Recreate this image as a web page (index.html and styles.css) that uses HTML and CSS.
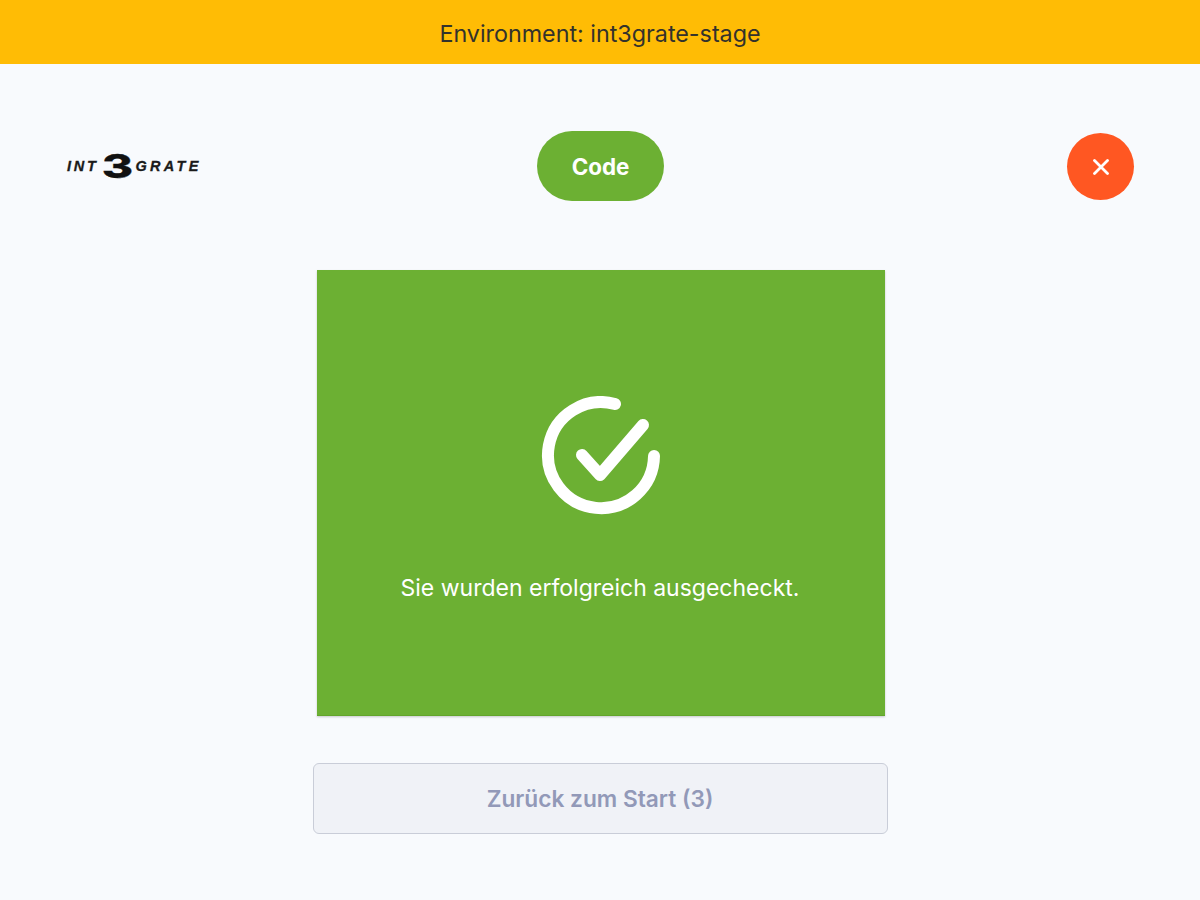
FILE: index.html
```html
<!DOCTYPE html>
<html lang="de">
<head>
  <meta charset="UTF-8">
  <meta name="viewport" content="width=device-width, initial-scale=1.0">
  <title>Checkout</title>
  <link rel="stylesheet" href="styles.css">
</head>
<body>
  <div class="env-banner">Environment: int3grate-stage</div>

  <header class="top-bar">
    <div class="logo"><span>INT</span><span class="logo-three">3</span><span class="logo-grate">GRATE</span></div>
    <div class="code-pill">Code</div>
    <button class="close-button" aria-label="Close">
      <svg width="18" height="18" viewBox="0 0 18 18">
        <path d="M2.5 3.5 L15.5 16.5 M15.5 3.5 L2.5 16.5" stroke="#fff" stroke-width="2.8" stroke-linecap="round" fill="none"/>
      </svg>
    </button>
  </header>

  <main class="content">
    <section class="success-card">
      <svg class="success-icon" width="120" height="120" viewBox="0 0 120 120">
        <path d="M74 8 A 53 53 0 1 0 113 60" stroke="#fff" stroke-width="12" stroke-linecap="round" fill="none"/>
        <path d="M41 59 L59 79 L102 29" stroke="#fff" stroke-width="12" stroke-linecap="round" stroke-linejoin="round" fill="none"/>
      </svg>
      <p class="success-text">Sie wurden erfolgreich ausgecheckt.</p>
    </section>
    <button class="back-button">Zurück zum Start (3)</button>
  </main>
</body>
</html>
```

FILE: styles.css
```css
/* Reset */
body, p, button {
    margin: 0;
    padding: 0;
    box-sizing: border-box;
}

body {
    font-family: 'Inter', sans-serif;
    background: #f8fafd;
    color: #333;
}

/* Environment banner */
.env-banner {
    height: 64px;
    padding-top: 2px;
    box-sizing: border-box;
    display: flex;
    align-items: center;
    justify-content: center;
    background: #ffbc05;
    color: #33322c;
    font-size: 23.3px;
}

/* Logo, step pill, close */
.top-bar {
    display: grid;
    grid-template-columns: 1fr auto 1fr;
    align-items: center;
    padding: 67px 66px 0 67px;
}

.logo {
    display: flex;
    align-items: center;
    height: 30px;
    font-family: 'Liberation Sans', sans-serif;
    font-size: 14.5px;
    font-weight: 700;
    font-style: italic;
    letter-spacing: 2.7px;
    color: #1a1a1a;
    -webkit-text-stroke: 0.3px #1a1a1a;
}

.logo-three {
    display: inline-block;
    width: 31px;
    margin: 0 2px 0 4px;
    font-family: 'Inter', sans-serif;
    font-size: 33px;
    font-weight: 800;
    font-style: normal;
    letter-spacing: 0;
    line-height: 30px;
    color: #111;
    text-align: center;
    transform: scaleX(1.45);
}

.logo-grate {
    letter-spacing: 3.3px;
}

.code-pill {
    width: 127px;
    height: 70px;
    display: flex;
    align-items: center;
    justify-content: center;
    border-radius: 35px;
    background: #6cb033;
    color: #fff;
    font-size: 22.4px;
    font-weight: 700;
}

.close-button {
    justify-self: end;
    width: 67px;
    height: 67px;
    display: flex;
    align-items: center;
    justify-content: center;
    border: none;
    border-radius: 50%;
    background: #ff5722;
}

/* Main column */
.content {
    display: flex;
    flex-direction: column;
    align-items: center;
    padding-top: 69px;
}

.success-card {
    width: 568px;
    height: 446px;
    margin-left: 2px;
    box-sizing: border-box;
    display: flex;
    flex-direction: column;
    align-items: center;
    padding-top: 126px;
    background: #6cb033;
    box-shadow: inset 0 -1px #62a52b, 0 1px 2px rgba(0, 0, 0, 0.2);
}

.success-text {
    margin-top: 57px;
    margin-right: 2px;
    color: #fff;
    font-size: 23px;
    line-height: 30px;
}

.back-button {
    width: 575px;
    height: 71px;
    margin-top: 47px;
    border: 1.5px solid #c9cdd8;
    border-radius: 6px;
    background: #f0f2f7;
    color: #9299b8;
    font-family: 'Inter', sans-serif;
    font-size: 22.7px;
    font-weight: 600;
}
```
